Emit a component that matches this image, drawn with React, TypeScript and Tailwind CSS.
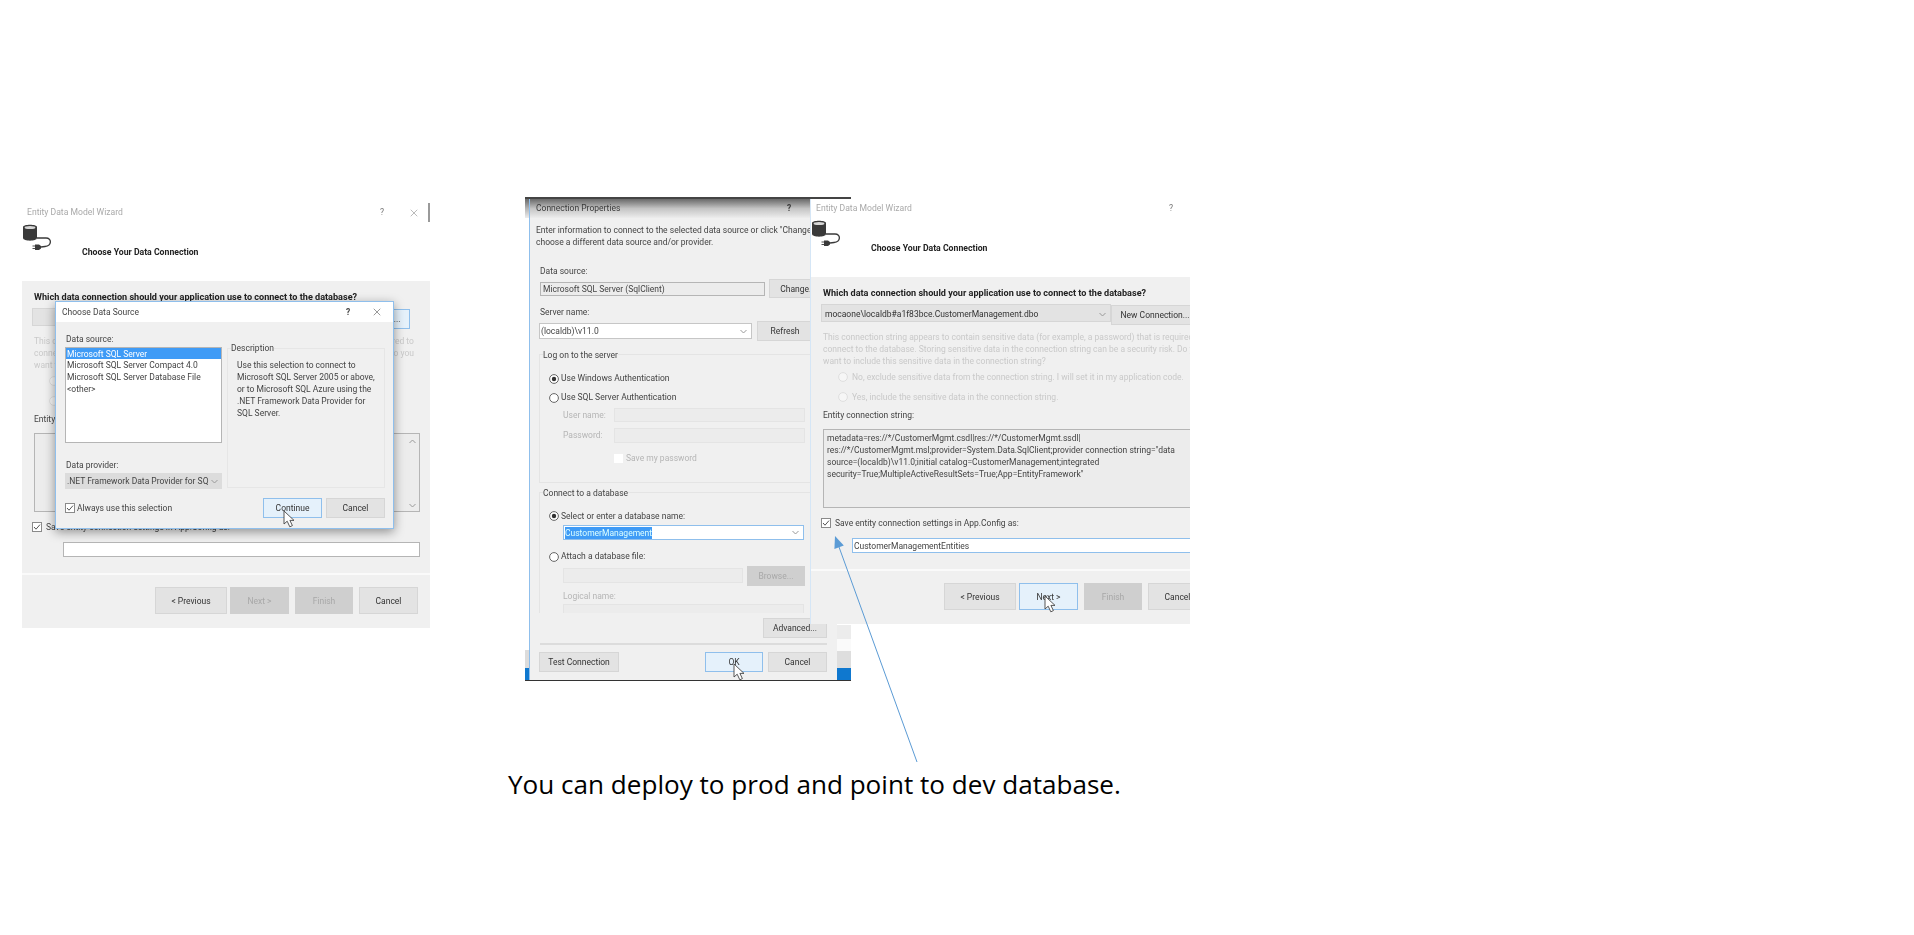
import type { ReactNode } from 'react';
import { X } from 'lucide-react';

const Btn = ({ label, className = '', active = false, off = false }: { label: string; className?: string; active?: boolean; off?: boolean }) => (
  <div
    className={`flex items-center justify-center border pt-[1px] text-[8.5px] whitespace-nowrap overflow-hidden ${
      active
        ? 'bg-[#e5f1fb] border-[#8fbfec] text-[#333]'
        : off
          ? 'bg-[#cfcfcf] border-[#cfcfcf] text-[#a8a8a8]'
          : 'bg-[#e3e3e3] border-[#d6d6d6] text-[#333]'
    } ${className}`}
  >
    {label}
  </div>
);

const Check = ({ className = '' }: { className?: string }) => (
  <svg className={`shrink-0 ${className}`} width="10" height="10" viewBox="0 0 10 10">
    <rect x="0.5" y="0.5" width="9" height="9" fill="#fff" stroke="#8a8a8a" />
    <path d="M2 5 L4 7.2 L8 2.6" fill="none" stroke="#555" strokeWidth="1" />
  </svg>
);

const Radio = ({ on = false, faint = false }: { on?: boolean; faint?: boolean }) => (
  <svg className="shrink-0" width="10" height="10" viewBox="0 0 10 10">
    <circle cx="5" cy="5" r="4.4" fill={faint ? '#f6f6f6' : '#fff'} stroke={faint ? '#dedede' : '#666'} />
    {on && <circle cx="5" cy="5" r="2.2" fill="#333" />}
  </svg>
);

const Chevron = ({ up = false }: { up?: boolean }) => (
  <svg className="shrink-0" width="7" height="5" viewBox="0 0 7 5">
    <path d={up ? 'M0.5 4 L3.5 1 L6.5 4' : 'M0.5 1 L3.5 4 L6.5 1'} fill="none" stroke="#999" />
  </svg>
);

const Pointer = ({ className }: { className: string }) => (
  <svg className={`absolute ${className}`} width="14" height="18" viewBox="0 0 14 18">
    <path d="M1 1 L1 14 L4.2 11.2 L6.8 16.8 L9.4 15.6 L6.9 10.4 L11 10.4 Z" fill="#fff" stroke="#444" strokeWidth="0.9" />
  </svg>
);

const DbIcon = ({ className }: { className: string }) => (
  <svg className={`absolute ${className}`} width="30" height="28" viewBox="0 0 30 28">
    <path d="M1 3 C1 0 15 0 15 3 L15 14 C15 17.5 1 17.5 1 14 Z" fill="#3a3a3a" />
    <ellipse cx="8" cy="3.4" rx="5.4" ry="1.5" fill="#d8d8d8" />
    <path d="M15 14 L24 14 C30 14 30 22 23 22.5 L19 23" fill="none" stroke="#3a3a3a" strokeWidth="1.3" />
    <path d="M13 20.5 H17 L19 22 V24.5 L17 26 H13 Z" fill="#3a3a3a" />
    <path d="M10.5 22 H13 M10.5 24.5 H13" stroke="#3a3a3a" strokeWidth="0.9" />
  </svg>
);

type WizardProps = {
  comboText?: string;
  connection?: string[];
  entityName?: ReactNode;
  activeNew?: boolean;
  nextActive?: boolean;
  closeX?: boolean;
  children?: ReactNode;
};

const sensitive = [
  'This connection string appears to contain sensitive data (for example, a password) that is required to',
  'connect to the database. Storing sensitive data in the connection string can be a security risk. Do you',
  'want to include this sensitive data in the connection string?',
];

const Wizard = ({ comboText, connection = [], entityName, activeNew, nextActive, closeX, children }: WizardProps) => (
  <div className="relative w-[408px] h-[425px] flex flex-col bg-white blur-[0.45px]">
    <div className="relative h-[78px] shrink-0">
      <div className="flex items-center h-[18px] pt-[1px] pl-[5px] text-[8.6px] text-[#a9a9a9]">
        <span className="w-[353px]">Entity Data Model Wizard</span>
        <span className="w-[28px] text-[#777]">?</span>
        {closeX && <X size={12} strokeWidth={1} className="text-[#777]" />}
      </div>
      <DbIcon className="left-[0px] top-[21px]" />
      <div className="mt-[22px] pt-[1px] pl-[60px] h-[18px] flex items-center text-[8.7px] font-bold text-[#222]">
        Choose Your Data Connection
      </div>
    </div>
    <div className="flex-1 flex flex-col bg-[#f0f0f0]">
      <div className="h-[27px] pt-[10px] pl-[12px] text-[9.1px] leading-[12px] font-bold text-[#222] whitespace-nowrap">
        Which data connection should your application use to connect to the database?
      </div>
      <div className="flex h-[21px] pl-[10px]">
        <div className="w-[290px] h-[18px] flex items-center justify-between pt-[2px] pl-[3px] pr-[4px] bg-[#e3e3e3] border border-[#d6d6d6] text-[8.5px] text-[#333]">
          <span>{comboText}</span>
          <Chevron />
        </div>
        <Btn label="New Connection..." active={activeNew} className="mt-[1px] w-[88px] h-[20px]" />
      </div>
      <div className="mt-[6px] pl-[12px] text-[8.5px] leading-[12px] text-[#c9c9c9] whitespace-nowrap">
        {sensitive.map((line) => (
          <div key={line} className="h-[12px]">{line}</div>
        ))}
      </div>
      <div className="flex items-center gap-[4px] h-[20px] pl-[27px] text-[8.5px] text-[#c9c9c9] whitespace-nowrap">
        <Radio faint />
        No, exclude sensitive data from the connection string. I will set it in my application code.
      </div>
      <div className="flex items-center gap-[4px] h-[20px] pl-[27px] text-[8.5px] text-[#c9c9c9] whitespace-nowrap">
        <Radio faint />
        Yes, include the sensitive data in the connection string.
      </div>
      <div className="h-[16px] flex items-center pt-[1px] pl-[12px] text-[8.5px] text-[#444]">Entity connection string:</div>
      <div className="mt-[6px] ml-[12px] w-[386px] h-[79px] flex justify-between bg-[#ececec] border border-[#b5b5b5] pl-[3px] pt-[2px] text-[8.5px] leading-[12px] text-[#444] whitespace-nowrap">
        <div>
          {connection.map((line) => (
            <div key={line} className="h-[12px]">{line}</div>
          ))}
        </div>
        <div className="flex flex-col justify-between py-[3px] pr-[3px]">
          <Chevron up />
          <Chevron />
        </div>
      </div>
      <div className="mt-[10px] h-[10px] pl-[10px] flex items-center gap-[4px] text-[8.5px] text-[#444] whitespace-nowrap">
        <Check />
        <span className="pt-[1px]">Save entity connection settings in App.Config as:</span>
      </div>
      <div className={`mt-[10px] ml-[41px] w-[357px] h-[15px] flex items-center bg-white border pl-[1px] pt-[1px] text-[8.5px] text-[#444] ${entityName ? 'border-[#8fbfec]' : 'border-[#b5b5b5]'}`}>
        {entityName}
      </div>
      <div className="mt-[16px] h-[55px] border-t-2 border-[#fafafa] pt-[12px] flex pl-[133px]">
        <Btn label="< Previous" className="w-[72px] h-[27px]" />
        <Btn label="Next >" active={nextActive} off={!nextActive} className="ml-[3px] w-[59px] h-[27px]" />
        <Btn label="Finish" off className="ml-[6px] w-[58px] h-[27px]" />
        <Btn label="Cancel" className="ml-[6px] w-[59px] h-[27px]" />
      </div>
    </div>
    {children}
  </div>
);

const ChooseSource = () => (
  <div className="absolute left-[33px] top-[98px] w-[339px] h-[228px] flex flex-col bg-[#f0f0f0] border border-[#8fbfec] shadow-[0_3px_10px_rgba(0,0,0,0.4)] text-[8.5px] text-[#444]">
    <div className="h-[20px] shrink-0 flex items-center bg-white pl-[6px] text-[#444]">
      <span className="w-[284px]">Choose Data Source</span>
      <span className="w-[25px] font-bold">?</span>
      <X size={12} strokeWidth={1} className="text-[#333]" />
    </div>
    <div className="flex">
      <div className="ml-[9px] w-[157px]">
        <div className="mt-[11px] h-[12px] leading-[12px] pl-[1px]">Data source:</div>
        <div className="mt-[2px] h-[96px] bg-white border border-[#b5b5b5] leading-[13px] whitespace-nowrap">
          <div className="h-[11px] bg-[#3f9bf6] text-white pl-[1px]">Microsoft SQL Server</div>
          <div className="h-[12px] pl-[1px]">Microsoft SQL Server Compact 4.0</div>
          <div className="h-[12px] pl-[1px]">Microsoft SQL Server Database File</div>
          <div className="h-[12px] pl-[1px]">&lt;other&gt;</div>
        </div>
        <div className="mt-[16px] h-[12px] leading-[12px] pl-[1px]">Data provider:</div>
        <div className="mt-[2px] h-[16px] flex items-center justify-between pt-[1px] pl-[2px] pr-[4px] bg-[#dcdcdc] whitespace-nowrap overflow-hidden">
          <span>.NET Framework Data Provider for SQ</span>
          <Chevron />
        </div>
      </div>
      <div className="relative ml-[5px] mt-[26px] w-[158px] h-[140px] border border-[#e6e6e6] pl-[9px] pt-[10px] leading-[12px] whitespace-nowrap">
        <span className="absolute left-[3px] top-[-7px] leading-[12px] bg-[#f0f0f0]">Description</span>
        <div>Use this selection to connect to</div>
        <div>Microsoft SQL Server 2005 or above,</div>
        <div>or to Microsoft SQL Azure using the</div>
        <div>.NET Framework Data Provider for</div>
        <div>SQL Server.</div>
      </div>
    </div>
    <div className="relative mt-[9px] flex items-start pl-[9px]">
      <div className="flex items-center gap-[2px] w-[198px] mt-[4px] h-[12px] whitespace-nowrap">
        <Check />
        Always use this selection
      </div>
      <Btn label="Continue" active className="w-[59px] h-[20px]" />
      <Btn label="Cancel" className="ml-[4px] w-[59px] h-[20px]" />
      <Pointer className="left-[227px] top-[12px]" />
    </div>
  </div>
);

const Field = ({ className = '' }: { className?: string }) => (
  <div className={`bg-[#ececec] border border-[#e4e4e4] ${className}`} />
);

const Connection = () => (
  <div className="absolute left-[525px] top-[197px] w-[326px] h-[484px] flex bg-white border-t-2 border-t-[#444] border-b border-b-[#333] blur-[0.45px] overflow-hidden">
    <div className="w-[4px] flex flex-col justify-between">
      <div className="h-[19px] bg-gradient-to-b from-[#6a6a6a] via-[#b5b5b5] to-[#ededed]" />
      <div className="flex flex-col">
        <div className="h-[18px] bg-[#dcdcdc]" />
        <div className="h-[12px] bg-[#0f78cf]" />
      </div>
    </div>
    <div className="w-[308px] flex flex-col bg-[#f0f0f0] border-l border-[#8fbfec] text-[8.5px] text-[#444] whitespace-nowrap">
      <div className="h-[19px] shrink-0 flex items-center pl-[6px] bg-gradient-to-b from-[#6a6a6a] via-[#c4c4c4] to-[#ededed] text-[#3a3a3a]">
        <span className="w-[251px]">Connection Properties</span>
        <span className="font-bold">?</span>
      </div>
      <div className="mt-[6px] pl-[6px] leading-[12px]">
        <div>Enter information to connect to the selected data source or click "Change"</div>
        <div>choose a different data source and/or provider.</div>
      </div>
      <div className="mt-[17px] pl-[10px] leading-[12px]">Data source:</div>
      <div className="mt-[2px] flex">
        <div className="ml-[10px] mt-[3px] w-[225px] h-[14px] flex items-center pt-[1px] pl-[2px] bg-[#ececec] border border-[#b5b5b5]">Microsoft SQL Server (SqlClient)</div>
        <Btn label="Change..." className="ml-[4px] w-[58px] h-[19px]" />
      </div>
      <div className="mt-[8px] pl-[10px] leading-[12px]">Server name:</div>
      <div className="mt-[3px] flex">
        <div className="ml-[9px] mt-[2px] w-[213px] h-[16px] flex items-center justify-between pt-[1px] pl-[1px] pr-[4px] bg-white border border-[#c6c6c6]">
          <span>(localdb)\v11.0</span>
          <Chevron />
        </div>
        <Btn label="Refresh" className="ml-[5px] w-[56px] h-[20px]" />
      </div>
      <div className="relative mt-[13px] ml-[9px] w-[288px] h-[129px] border border-[#e4e4e4] pl-[9px] pt-[14px]">
        <span className="absolute left-[3px] top-[-6px] leading-[12px] bg-[#f0f0f0]">Log on to the server</span>
        <div className="h-[19px] flex items-center gap-[2px]"><Radio on />Use Windows Authentication</div>
        <div className="h-[19px] flex items-center gap-[2px]"><Radio />Use SQL Server Authentication</div>
        <div className="mt-[1px] flex items-center text-[#b5b5b5]">
          <span className="ml-[14px] w-[51px]">User name:</span>
          <Field className="w-[191px] h-[14px]" />
        </div>
        <div className="mt-[6px] flex items-center text-[#b5b5b5]">
          <span className="ml-[14px] w-[51px]">Password:</span>
          <Field className="w-[191px] h-[15px]" />
        </div>
        <div className="mt-[10px] ml-[65px] flex items-center gap-[3px] h-[10px] text-[#b5b5b5]">
          <div className="w-[9px] h-[9px] bg-white" />
          Save my password
        </div>
      </div>
      <div className="relative mt-[9px] ml-[9px] w-[288px] h-[121px] border-l border-t border-[#e4e4e4] pl-[9px] pt-[14px]">
        <span className="absolute left-[3px] top-[-6px] leading-[12px] bg-[#f0f0f0]">Connect to a database</span>
        <div className="h-[18px] flex items-center gap-[2px]"><Radio on />Select or enter a database name:</div>
        <div className="ml-[14px] w-[241px] h-[15px] flex items-center justify-between pl-[1px] pr-[4px] bg-white border border-[#8fbfec]">
          <span className="bg-[#3f9bf6] text-[#dff] leading-[12px]">CustomerManagement</span>
          <Chevron />
        </div>
        <div className="mt-[7px] h-[19px] flex items-center gap-[2px]"><Radio />Attach a database file:</div>
        <div className="flex ml-[14px]">
          <Field className="mt-[2px] w-[180px] h-[15px]" />
          <Btn label="Browse..." off className="ml-[4px] w-[58px] h-[20px]" />
        </div>
        <div className="mt-[4px] ml-[14px] leading-[12px] text-[#b5b5b5]">Logical name:</div>
        <div className="mt-[2px] ml-[14px] w-[241px] h-[9px] bg-[#ececec] border-t border-x border-[#e4e4e4]" />
      </div>
      <Btn label="Advanced..." className="mt-[5px] ml-[233px] w-[64px] h-[20px]" />
      <div className="mt-[5px] ml-[10px] w-[287px] h-[2px] bg-[#dcdcdc]" />
      <div className="relative mt-[7px] flex">
        <Btn label="Test Connection" className="ml-[9px] w-[80px] h-[20px]" />
        <Btn label="OK" active className="ml-[86px] w-[58px] h-[20px]" />
        <Btn label="Cancel" className="ml-[5px] w-[59px] h-[20px]" />
        <Pointer className="left-[203px] top-[11px]" />
      </div>
    </div>
    <div className="flex-1 flex flex-col justify-end">
      <div className="h-[14px] bg-[#ececec]" />
      <div className="h-[12px] bg-[#fafafa]" />
      <div className="h-[17px] bg-[#dedede]" />
      <div className="h-[12px] bg-[#0f78cf]" />
    </div>
  </div>
);

const connectionString = [
  'metadata=res://*/CustomerMgmt.csdl|res://*/CustomerMgmt.ssdl|',
  'res://*/CustomerMgmt.msl;provider=System.Data.SqlClient;provider connection string="data',
  'source=(localdb)\\v11.0;initial catalog=CustomerManagement;integrated',
  'security=True;MultipleActiveResultSets=True;App=EntityFramework"',
];

export default function App() {
  return (
    <div className="relative w-[1914px] h-[935px] bg-white overflow-hidden font-['Roboto',sans-serif]">
      <div className="absolute left-[22px] top-[203px]">
        <Wizard activeNew closeX>
          <div className="absolute right-0 top-0 w-[2px] h-[19px] bg-[#9a9a9a]" />
          <ChooseSource />
        </Wizard>
      </div>

      <Connection />

      <div className="absolute left-[810px] top-[199px] w-[380px] h-[425px] overflow-hidden border-l border-[#d5e6f6]">
        <Wizard
          comboText="mocaone\localdb#a1f83bce.CustomerManagement.dbo"
          connection={connectionString}
          entityName="CustomerManagementEntities"
          nextActive
        >
          <Pointer className="left-[233px] top-[396px]" />
        </Wizard>
      </div>

      <svg className="absolute left-[830px] top-[530px]" width="95" height="240" viewBox="0 0 95 240">
        <path d="M87 232 L9 17" stroke="#5b9bd5" strokeWidth="1" fill="none" />
        <path d="M5 6 L13.8 15.6 L4.4 19 Z" fill="#5b9bd5" />
      </svg>

      <div className="absolute left-[508px] top-[766px] font-['Open_Sans',sans-serif] text-[26.1px] leading-[36px] text-black whitespace-nowrap">
        You can deploy to prod and point to dev database.
      </div>
    </div>
  );
}
